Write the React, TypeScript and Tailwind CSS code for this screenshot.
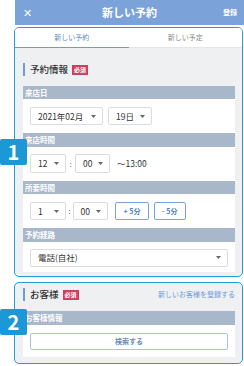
import React from 'react';

const Caret = () => (
  <svg width="5" height="3" viewBox="0 0 5 3" className="shrink-0">
    <polygon points="0,0 5,0 2.5,3" fill="#666" />
  </svg>
);

function Select({ value, w }: { value: string; w: string }) {
  return (
    <div
      className={`${w} h-[18.5px] flex items-center justify-between pl-[7px] pr-[6px] bg-white border border-[#d9dce1] rounded-[2px] text-[8.5px] text-[#333]`}
    >
      <span>{value}</span>
      <Caret />
    </div>
  );
}

function LabelBar({ text }: { text: string }) {
  return (
    <div className="h-[13.5px] flex items-center px-[2px] bg-[#a9b7ca] text-[7.5px] font-bold text-white">
      {text}
    </div>
  );
}

function SectionTitle({ text, right }: { text: string; right?: string }) {
  return (
    <div className="h-[13px] flex items-center">
      <div className="w-[2px] h-[13px] bg-[#6e9bd6]" />
      <span className="ml-[5px] text-[9.5px] font-medium text-[#333] leading-none">{text}</span>
      <span className="ml-[4px] h-[10px] px-[2px] flex items-center bg-[#d43b5f] text-[6px] font-bold text-white leading-none">
        必須
      </span>
      {right && <span className="ml-auto text-[7px] text-[#6e9bd6]">{right}</span>}
    </div>
  );
}

function SmallButton({ label, w }: { label: string; w: string }) {
  return (
    <div
      className={`${w} h-[18.5px] flex items-center justify-center bg-white border border-[#7ba3d8] rounded-[2px] text-[7px] font-bold text-[#4a80c4]`}
    >
      {label}
    </div>
  );
}

export default function App() {
  return (
    <div className="relative w-[244px] h-[366px] overflow-hidden bg-white font-['Noto_Sans_CJK_JP','Noto_Sans',sans-serif]">
      <div className="ml-[14px] w-[230px]">
        <header className="ml-[1px] h-[25px] bg-[#7ca3d9] flex items-center justify-between pl-[8px] pr-[7px] relative text-white">
          <span className="text-[11px] leading-none">✕</span>
          <span className="absolute left-1/2 -translate-x-1/2 text-[11px] font-bold">新しい予約</span>
          <span className="text-[7px] font-bold">登録</span>
        </header>

        <div className="mt-[2px] w-[229px] h-[250px] border-[1.5px] border-[#1e9fd9] rounded-[5px] bg-[#eef0f2] overflow-hidden">
          <div className="h-[20px] bg-white flex text-[7px]">
            <div className="flex-1 flex items-center justify-center text-[#5f88ba] border-b-[1.5px] border-[#6e9bd6]">
              新しい予約
            </div>
            <div className="flex-1 flex items-center justify-center text-[#888] border-b border-[#e3e5e8]">
              新しい予定
            </div>
          </div>

          <div className="pl-[8px] pr-[7px]">
            <div className="pt-[15px] pb-[9.5px]">
              <SectionTitle text="予約情報" />
            </div>

            <div className="bg-white">
              <LabelBar text="来店日" />
              <div className="h-[34px] flex items-center gap-[5.5px] px-[7px]">
                <Select value="2021年02月" w="w-[72.5px]" />
                <Select value="19日" w="w-[44px]" />
              </div>

              <LabelBar text="来店時間" />
              <div className="h-[34px] flex items-center px-[7px]">
                <Select value="12" w="w-[36px]" />
                <span className="w-[9px] text-center text-[8px] text-[#666]">:</span>
                <Select value="00" w="w-[35px]" />
                <span className="ml-[7px] text-[8.5px] text-[#333]">〜13:00</span>
              </div>

              <LabelBar text="所要時間" />
              <div className="h-[34px] flex items-center px-[7px]">
                <Select value="1" w="w-[36px]" />
                <span className="w-[6.5px] text-center text-[8px] text-[#666]">:</span>
                <Select value="00" w="w-[35px]" />
                <div className="ml-[7.5px] flex gap-[5px]">
                  <SmallButton label="+ 5分" w="w-[34px]" />
                  <SmallButton label="- 5分" w="w-[31.5px]" />
                </div>
              </div>

              <LabelBar text="予約経路" />
              <div className="pt-[7px] pb-[5px] px-[7px]">
                <Select value="電話(自社)" w="w-full" />
              </div>
            </div>
          </div>
        </div>

        <div className="mt-[5px] w-[229px] h-[82px] border-[1.5px] border-[#1e9fd9] rounded-[5px] bg-[#eef0f2] overflow-hidden">
          <div className="pl-[8px] pr-[7px]">
            <div className="pt-[5px] pb-[10px]">
              <SectionTitle text="お客様" right="新しいお客様を登録する" />
            </div>
            <div className="bg-white">
              <LabelBar text="お客様情報" />
              <div className="pt-[8px] pb-[7px] px-[7px]">
                <div className="h-[17px] flex items-center justify-center border border-[#a9c3e3] rounded-[2px] text-[7px] font-bold text-[#6d8bb3]">
                  検索する
                </div>
              </div>
            </div>
          </div>
        </div>
      </div>

      <div className="absolute left-0 top-[139px] w-[27px] h-[26px] rounded-[2px] bg-[#1b98d5] flex items-center justify-center text-white text-[20px] font-bold leading-none">
        1
      </div>
      <div className="absolute left-0 top-[309px] w-[27px] h-[26px] rounded-[2px] bg-[#1b98d5] flex items-center justify-center text-white text-[20px] font-bold leading-none">
        2
      </div>
    </div>
  );
}
